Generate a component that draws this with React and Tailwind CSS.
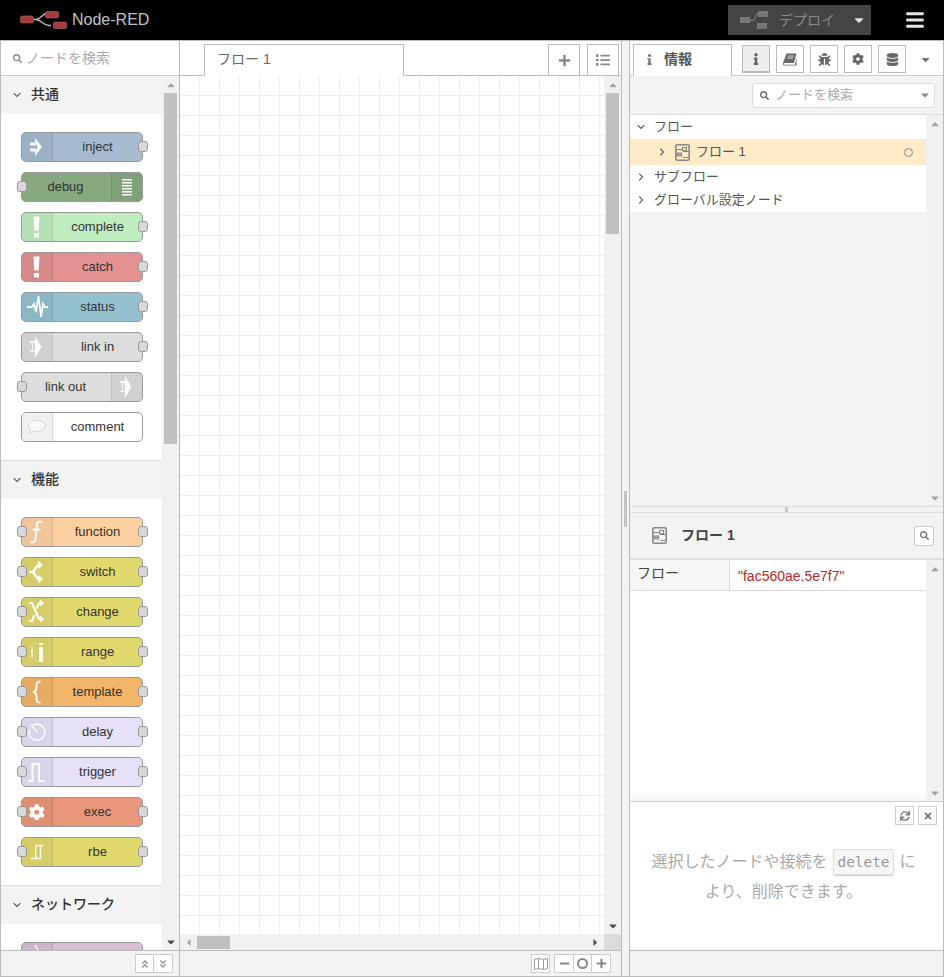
import React from "react";
import {
  FaSearch, FaPlus, FaList, FaBars, FaInfo, FaBug, FaCog, FaDatabase, FaCaretDown, FaCaretUp,
  FaCaretLeft, FaCaretRight, FaMinus, FaTimes, FaSync, FaAngleDoubleUp, FaAngleDoubleDown,
} from "react-icons/fa";

const W = "#ffffff";

const Icons = {
  inject: (
    <g fill={W} fillOpacity="0.9">
      <rect x="8" y="9.500" width="6" height="3" />
      <rect x="8" y="15.500" width="6" height="3" />
      <path d="M13 5l7 9-7 9v-3.500l3.500-5.500-3.500-5.500z" />
      <path d="M13 7l6 7-6 7 2.500-7z" />
    </g>
  ),
  debug: (
    <g fill={W} fillOpacity="0.9">
      {[0, 3, 6, 9, 12, 15].map((d) => (
        <rect key={d} x="10" y={6 + d} width="10" height="1.600" />
      ))}
    </g>
  ),
  alert: (
    <g fill={W} fillOpacity="0.95">
      <path d="M11.500 3.500h6l-.8 14h-4.400z" />
      <rect x="12" y="20" width="5" height="4.500" />
    </g>
  ),
  status: (
    <path d="M5 14h5l2-3 2 8 2.500-16 2.500 21 2-13 1.500 3h3.500" fill="none" stroke={W} strokeWidth="1.800" strokeOpacity="0.95" />
  ),
  link: (
    <path d="M8 8h5V3l6.500 11L13 25v-6H8v-1h1.500q1.500-4 0-8H8zM10.500 10q1.500 4 0 8H12q2-4 0-8z" fill={W} fillOpacity="0.9" fillRule="evenodd" />
  ),
  comment: (
    <g fill="#fafafa" stroke="#d4d4d4" strokeWidth="1">
      <path d="M15 7.500c-4.800 0-8.500 2-8.500 5 0 1.800 1.200 3 2.500 4-.2 1.500-1.200 3-2.500 4 2.500-.3 4-1 5.500-2.500 1 .2 2 .3 3 .3 4.500 0 8-2.300 8-5.800s-3.500-5-8-5z" />
    </g>
  ),
  fn: (
    <g fill="none" stroke={W} strokeOpacity="0.95" strokeWidth="2">
      <path d="M20 4c-3-1.500-5 .5-5 3l-1.500 14c-.3 3-2.500 4-5 3" />
      <path d="M10.500 11.500h8" />
    </g>
  ),
  sw: (
    <g fill="none" stroke={W} strokeOpacity="0.95" strokeWidth="2.400">
      <path d="M7 14h4l5-7h2" />
      <path d="M11 14l5 7h2" />
      <path d="M16 3.500l3.500 3.500-3 3" strokeWidth="2" />
      <path d="M16 18l3.500 3-3 3.500" strokeWidth="2" />
    </g>
  ),
  swap: (
    <g fill="none" stroke={W} strokeOpacity="0.95" strokeWidth="2.200">
      <path d="M7 5h3l7 16h3" />
      <path d="M7 23h3l2.500-6" />
      <path d="M14.500 10.500l2.500-5.500h3" />
      <path d="M18 2l3 3-3 3" strokeWidth="1.500" />
      <path d="M18 18l3 3-3 3" strokeWidth="1.500" />
    </g>
  ),
  range: (
    <g fill={W} fillOpacity="0.9">
      <rect x="9" y="8" width="2" height="1.500" fillOpacity="0.6" />
      <rect x="9" y="11" width="2" height="8" fillOpacity="0.7" />
      <rect x="17" y="5" width="4" height="2" />
      <rect x="17" y="9" width="4" height="15" />
      <path d="M12 6l4-1v.8l-4 1zM12 20l4 3v1l-4-3z" fillOpacity="0.35" />
    </g>
  ),
  template: (
    <path d="M18.500 3.500c-3.500 0-4 1.500-4 4v2.500c0 2.500-1 3.500-3.500 4 2.500.5 3.500 1.500 3.500 4v3c0 2.500.5 3.500 4 3.500" fill="none" stroke={W} strokeOpacity="0.95" strokeWidth="2" />
  ),
  delay: (
    <g fill="none" stroke={W} strokeOpacity="0.9" strokeWidth="1.500">
      <path d="M10 7.800a8 8 0 1 1-2.800 4.200" />
      <path d="M9 7l6.500 7.500" />
    </g>
  ),
  trigger: (
    <path d="M6 23h4.500V6H17v17h6" fill="none" stroke={W} strokeOpacity="0.95" strokeWidth="1.900" />
  ),
  cog: (
    <g transform="translate(6.500 6)">
      <FaCog size={16.500} color={W} />
    </g>
  ),
  rbe: (
    <g fill="none" stroke={W} strokeOpacity="0.9" strokeWidth="1.400">
      <path d="M8.500 20.500h10V7.500h3M13.700 20.500V7.500h5" />
    </g>
  ),
  net: (
    <path d="M13 2l3 5" fill="none" stroke={W} strokeOpacity="0.9" strokeWidth="1.500" />
  ),
};

const Node = ({ label, color, icon, left, out = true, input = false, iconBg }) => (
  <div className={"relative flex h-[30px] w-[122px] shrink-0 rounded-[5px] border border-[#999] " + (left ? "flex-row-reverse" : "flex-row")} style={{ backgroundColor: color }}>
    <div
      className={"h-[28px] w-[31px] shrink-0 overflow-hidden " + (left ? "border-l border-l-[#0000001a] rounded-r-[4px]" : "border-r border-r-[#0000001a] rounded-l-[4px]")}
      style={{ backgroundColor: iconBg || "rgba(0,0,0,0.05)" }}
    >
      <svg width="30" height="28" viewBox="0 0 30 28">
        {Icons[icon]}
      </svg>
    </div>
    <div className={"flex-1 truncate text-center text-[13px] leading-[28px] text-[#333] " + (left ? "pr-[2px]" : "")}>{label}</div>
    {input && <span className="absolute left-[-5px] top-[8px] h-[11px] w-[10px] rounded-[3px] border border-[#999] bg-[#d9d9d9]" />}
    {out && <span className="absolute right-[-6px] top-[8px] h-[11px] w-[10px] rounded-[3px] border border-[#999] bg-[#d9d9d9]" />}
  </div>
);

const Chevron = ({ open = true, className = "" }) => (
  <svg width="8" height="8" viewBox="0 0 8 8" className={className}>
    <path d={open ? "M.7 2.200L4 5.500l3.300-3.300" : "M2.200 .7L5.500 4 2.200 7.300"} fill="none" stroke="#555" strokeWidth="1.100" />
  </svg>
);

const PaletteHeader = ({ children }) => (
  <div className="flex h-[38px] shrink-0 items-center bg-[#f3f3f3] pb-[1px] pl-[12px] text-[14px] font-medium text-[#333]">
    <Chevron className="mr-[10px]" />
    {children}
  </div>
);

const common = [
  { label: "inject", color: "#a6bbcf", icon: "inject" },
  { label: "debug", color: "#87a980", icon: "debug", left: true, out: false, input: true },
  { label: "complete", color: "#c0edc0", icon: "alert" },
  { label: "catch", color: "#e49191", icon: "alert" },
  { label: "status", color: "#94c1d0", icon: "status" },
  { label: "link in", color: "#dddddd", icon: "link" },
  { label: "link out", color: "#dddddd", icon: "link", left: true, out: false, input: true },
  { label: "comment", color: "#ffffff", icon: "comment", out: false, iconBg: "#f0f0f0" },
];
const fn = [
  { label: "function", color: "#fdd0a2", icon: "fn" },
  { label: "switch", color: "#e2d96e", icon: "sw" },
  { label: "change", color: "#e2d96e", icon: "swap" },
  { label: "range", color: "#e2d96e", icon: "range" },
  { label: "template", color: "#f3b567", icon: "template" },
  { label: "delay", color: "#e6e0f8", icon: "delay" },
  { label: "trigger", color: "#e6e0f8", icon: "trigger" },
  { label: "exec", color: "#e9967a", icon: "cog" },
  { label: "rbe", color: "#e2d96e", icon: "rbe" },
].map((n) => ({ ...n, input: true }));

const Logo = () => (
  <svg width="47" height="18" viewBox="0 0 47 18" className="block">
    <path d="M13 8.500h3c5 0 6-6 11-6h2M16 8.500c5 0 7 6 13 6h2" fill="none" stroke="#bbbbbb" strokeWidth="1.300" />
    <rect x="0.500" y="5" width="13" height="7" rx="1.500" fill="#a33a3e" stroke="#b06a6c" strokeWidth="0.600" />
    <rect x="25.500" y="0.500" width="13" height="6.500" rx="1.500" fill="#a33a3e" stroke="#b06a6c" strokeWidth="0.600" />
    <rect x="33.500" y="11" width="13" height="6.500" rx="1.500" fill="#a33a3e" stroke="#b06a6c" strokeWidth="0.600" />
  </svg>
);

const DeployIcon = () => (
  <svg width="28" height="18" viewBox="0 0 28 18" className="block">
    <path d="M10 9.500h3.500l4-7h2" fill="none" stroke="#777" strokeWidth="1.300" />
    <rect x="0" y="6" width="10" height="6" fill="#777" />
    <rect x="18" y="0" width="10" height="6" fill="#777" />
    <rect x="17" y="12" width="10" height="6" fill="#777" />
  </svg>
);

const FlowIcon = () => (
  <svg width="15" height="17" viewBox="0 0 15 17" className="block">
    <rect x="0.800" y="0.800" width="13.400" height="15.400" rx="1.500" fill="none" stroke="#888" strokeWidth="1.600" />
    <path d="M1 5.500h7M8 7.500h6M1 10.500h5M8 13.500h6" stroke="#888" strokeWidth="1.200" fill="none" />
    <rect x="7.500" y="3.500" width="4" height="3" fill="none" stroke="#888" strokeWidth="1.100" />
    <rect x="2.500" y="9" width="4" height="3" fill="none" stroke="#888" strokeWidth="1.100" />
  </svg>
);

const BookIcon = () => (
  <svg width="14" height="13" viewBox="0 0 14 13" className="block">
    <path d="M3.500 .5h10l-2.600 9.500H1.500c-1 0-.8 1.800.2 1.800h10.300l1.500-8v8.700H1.500C.2 12.500-.3 11.200 .2 9.500z" fill="#666" />
    <path d="M4.800 3h6M4.200 5h6" stroke="#f3f3f3" strokeWidth="0.800" />
  </svg>
);

const TabBtn = ({ children, active }) => (
  <div className={"flex h-[28px] w-[28px] items-center justify-center border border-[#bbb] text-[#666] " + (active ? "border-b-2 bg-[#eeeeee]" : "bg-white")}>
    {children}
  </div>
);

const SmallBtn = ({ children, className = "" }) => (
  <div className={"flex h-[19px] items-center justify-center border border-[#ccc] bg-white text-[#888] " + className}>{children}</div>
);

const VTrack = ({ thumbH, width = "w-[17px]", downColor = "#505050" }) => (
  <div className={"flex shrink-0 flex-col items-center bg-[#f1f1f1] " + width}>
    <div className="flex h-[17px] w-full shrink-0 items-center justify-center">
      <FaCaretUp size={12} color="#a3a3a3" />
    </div>
    {thumbH ? <div className="w-[13px] bg-[#c1c1c1]" style={{ height: thumbH }} /> : null}
    <div className="flex-1" />
    <div className="flex h-[17px] w-full shrink-0 items-center justify-center">
      <FaCaretDown size={12} color={downColor} />
    </div>
  </div>
);

export default function App() {
  return (
    <div className="flex h-[977px] w-[944px] flex-col overflow-hidden bg-white font-['Liberation_Sans','Noto_Sans_CJK_JP',sans-serif] text-[#555]">
      {/* header */}
      <header className="flex h-[40px] shrink-0 items-center bg-black pl-[20px] pr-[20px]">
        <Logo />
        <span className="ml-[5px] text-[16px] text-[#c2c2c2]">Node-RED</span>
        <div className="ml-auto flex h-[30px] w-[143px] items-center bg-[#444] pl-[12px] pr-[5px]">
          <DeployIcon />
          <span className="ml-[11px] text-[14px] text-[#8a8a8a]">デプロイ</span>
          <FaCaretDown size={14} color="#e0e0e0" className="ml-auto" />
        </div>
        <FaBars size={20} color="#e4e4e4" className="ml-[34px] mr-[-1px]" />
      </header>

      <div className="flex min-h-0 flex-1 border-y border-[#bbb]">
        {/* palette */}
        <aside className="flex w-[180px] shrink-0 flex-col border-x border-[#bbb]">
          <div className="flex h-[35px] shrink-0 items-center border-b border-[#ccc] pl-[12px] pt-[1px] text-[14px] text-[#aaa]">
            <FaSearch size={9} color="#888" className="mr-[4px]" />
            ノードを検索
          </div>
          <div className="flex min-h-0 flex-1">
            <div className="min-w-0 flex-1 overflow-hidden">
              <PaletteHeader>共通</PaletteHeader>
              <div className="flex flex-col gap-[10px] border-b border-[#ddd] px-[20px] py-[18px]">
                {common.map((n) => <Node key={n.label} {...n} />)}
              </div>
              <PaletteHeader>機能</PaletteHeader>
              <div className="flex flex-col gap-[10px] border-b border-[#ddd] px-[20px] py-[18px]">
                {fn.map((n) => <Node key={n.label} {...n} />)}
              </div>
              <PaletteHeader>ネットワーク</PaletteHeader>
              <div className="px-[20px] py-[18px]">
                <Node label="" color="#d8bfd8" icon="net" out={false} />
              </div>
            </div>
            <VTrack thumbH={351} />
          </div>
          <div className="flex h-[26px] shrink-0 items-center justify-end border-t border-[#bbb] bg-[#f3f3f3] pr-[6px]">
            <SmallBtn className="w-[19px]"><FaAngleDoubleUp size={10} color="#999" /></SmallBtn>
            <SmallBtn className="ml-[-1px] w-[20px]"><FaAngleDoubleDown size={10} color="#999" /></SmallBtn>
          </div>
        </aside>

        {/* workspace */}
        <main className="flex w-[442px] shrink-0 flex-col border-r border-[#bbb]">
          <div className="flex h-[35px] shrink-0 items-end border-b border-[#bbb] pl-[24px] pr-[2px]">
            <div className="mb-[-1px] flex h-[32px] w-[200px] items-center border-x border-t border-[#bbb] bg-white pb-[2px] pl-[12px] text-[14px] text-[#666]">フロー 1</div>
            <div className="ml-auto flex h-[31px] w-[32px] items-center justify-center border-x border-t border-[#bbb] bg-white">
              <FaPlus size={13} color="#888" />
            </div>
            <div className="ml-[7px] flex h-[31px] w-[32px] items-center justify-center border-x border-t border-[#bbb] bg-white">
              <FaList size={14} color="#888" />
            </div>
          </div>
          <div className="flex min-h-0 flex-1">
            <div className="min-h-0 min-w-0 flex-1 bg-white bg-[linear-gradient(#eeeeee_1px,transparent_1px),linear-gradient(90deg,#eeeeee_1px,transparent_1px)] bg-[length:20px_20px] bg-[position:19px_19px]" />
            <VTrack thumbH={141} />
          </div>
          <div className="flex h-[16px] shrink-0 items-center bg-[#f1f1f1]">
            <div className="flex w-[17px] justify-center"><FaCaretLeft size={11} color="#a3a3a3" /></div>
            <div className="h-[13px] w-[33px] bg-[#c1c1c1]" />
            <div className="flex-1" />
            <div className="flex w-[17px] justify-center"><FaCaretRight size={11} color="#505050" /></div>
            <div className="h-[16px] w-[17px] bg-[#dcdcdc]" />
          </div>
          <div className="flex h-[26px] shrink-0 items-center justify-end border-t border-[#bbb] bg-[#f3f3f3] pr-[10px]">
            <SmallBtn className="w-[19px]">
              <svg width="14" height="12" viewBox="0 0 14 12">
                <path d="M.5 1.500l4-1 5 1 4-1v10l-4 1-5-1-4 1zM4.500 .5v10M9.500 1.500v10" fill="none" stroke="#999" />
              </svg>
            </SmallBtn>
            <SmallBtn className="ml-[4px] w-[20px]"><FaMinus size={11} color="#888" /></SmallBtn>
            <SmallBtn className="ml-[-1px] w-[19px]">
              <span className="block h-[11px] w-[11px] rounded-full border-2 border-[#888]" />
            </SmallBtn>
            <SmallBtn className="ml-[-1px] w-[20px]"><FaPlus size={11} color="#888" /></SmallBtn>
          </div>
        </main>

        {/* separator */}
        <div className="flex w-[7px] shrink-0 items-center bg-[#f3f3f3] pl-[2px]">
          <div className="h-[36px] w-[3px] bg-[#c4c4c4]" />
        </div>

        {/* sidebar */}
        <aside className="flex min-w-0 flex-1 flex-col border-x border-[#bbb]">
          <div className="flex h-[35px] shrink-0 items-end border-b border-[#ccc] pl-[3px]">
            <div className="mb-[-1px] flex h-[32px] w-[99px] items-center border-x border-t border-[#bbb] bg-white pb-[2px] pl-[10px] text-[14px] font-bold text-[#555]">
              <FaInfo size={11} color="#777" className="mr-[9px]" />
              情報
            </div>
            <div className="mb-[2px] ml-[10px] flex gap-[6px]">
              <TabBtn active><FaInfo size={12} color="#666" /></TabBtn>
              <TabBtn><BookIcon /></TabBtn>
              <TabBtn><FaBug size={13} color="#666" /></TabBtn>
              <TabBtn><FaCog size={12} color="#666" /></TabBtn>
              <TabBtn><FaDatabase size={13} color="#666" /></TabBtn>
            </div>
            <div className="mb-[9px] ml-[13px]"><FaCaretDown size={13} color="#777" /></div>
          </div>

          <div className="flex h-[39px] shrink-0 items-center justify-end border-b border-[#ddd] bg-[#f3f3f3] pr-[8px]">
            <div className="flex h-[25px] w-[183px] items-center rounded-[3px] border border-[#ddd] bg-white pl-[7px] pr-[3px] text-[13px] text-[#aaa]">
              <FaSearch size={9} color="#666" className="mr-[6px]" />
              ノードを検索
              <FaCaretDown size={12} color="#888" className="ml-auto" />
            </div>
          </div>

          <div className="flex h-[391px] shrink-0">
            <div className="min-w-0 flex-1 bg-[#f3f3f3]">
              <div className="bg-white text-[13px] text-[#555]">
                <div className="flex h-[24px] items-center pl-[7px]"><Chevron className="mr-[9px]" />フロー</div>
                <div className="flex h-[26px] items-center bg-[#ffebc7] pl-[28px] pr-[13px]">
                  <Chevron open={false} className="mr-[9px]" />
                  <FlowIcon />
                  <span className="ml-[6px]">フロー 1</span>
                  <span className="ml-auto h-[9px] w-[9px] rounded-full border border-[#888]" />
                </div>
                <div className="flex h-[23px] items-center pl-[7px]"><Chevron open={false} className="mr-[9px]" />サブフロー</div>
                <div className="flex h-[24px] items-center pl-[7px]"><Chevron open={false} className="mr-[9px]" />グローバル設定ノード</div>
              </div>
            </div>
            <VTrack downColor="#a3a3a3" />
          </div>

          <div className="flex h-[7px] shrink-0 justify-center border-y border-[#ddd] bg-[#f3f3f3]">
            <div className="h-full w-[3px] bg-[#c8c8c8]" />
          </div>

          <div className="flex h-[47px] shrink-0 items-center border-b-2 border-[#ddd] bg-[#f3f3f3] pl-[22px] pr-[9px]">
            <FlowIcon />
            <span className="ml-[14px] text-[14px] font-bold text-[#444]">フロー 1</span>
            <div className="ml-auto flex h-[20px] w-[20px] items-center justify-center rounded-[2px] border border-[#ccc] bg-white">
              <FaSearch size={9} color="#777" />
            </div>
          </div>

          <div className="flex h-[241px] shrink-0">
            <div className="min-w-0 flex-1 bg-[linear-gradient(to_bottom,#ffffff_96%,#f4f4f4)]">
              <div className="flex h-[31px] border-b border-[#ddd]">
                <div className="w-[100px] border-r border-[#ddd] bg-[#f6f6f6] pl-[7px] pt-[3px] text-[14px] text-[#444]">フロー</div>
                <div className="pl-[8px] pt-[6px] text-[14px] text-[#b72828]">"fac560ae.5e7f7"</div>
              </div>
            </div>
            <VTrack downColor="#a3a3a3" />
          </div>

          <div className="flex min-h-0 flex-1 flex-col border-t border-[#ccc]">
            <div className="flex justify-end gap-[4px] pr-[6px] pt-[4px]">
              <SmallBtn className="w-[19px]"><FaSync size={10} color="#777" /></SmallBtn>
              <SmallBtn className="w-[19px]"><FaTimes size={10} color="#777" /></SmallBtn>
            </div>
            <div className="mt-[22px] pl-[20px] pr-[26px] text-center text-[16px] leading-[30px] text-[#aaa]">
              <span>選択したノードや接続を</span>
              <code className="mx-[5px] rounded-[3px] border border-[#ddd] bg-[#f6f6f6] px-[4px] py-[4px] font-['DejaVu_Sans_Mono',monospace] text-[14.400px] text-[#999] shadow-[0_1px_1px_#ccc]">delete</code>
              <span>に</span>
              <br />
              <span>より、削除できます。</span>
            </div>
          </div>

          <div className="h-[26px] shrink-0 border-t border-[#bbb] bg-[#f3f3f3]" />
        </aside>
      </div>
    </div>
  );
}
